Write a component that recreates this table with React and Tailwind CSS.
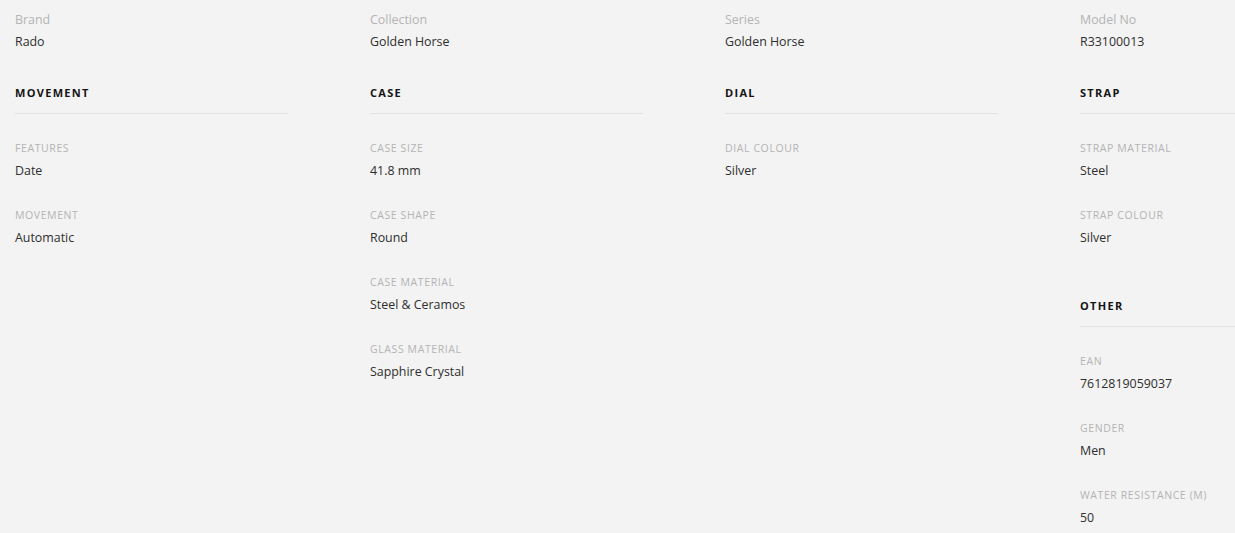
import React from 'react';

const top = [
  { label: 'Brand', value: 'Rado' },
  { label: 'Collection', value: 'Golden Horse' },
  { label: 'Series', value: 'Golden Horse' },
  { label: 'Model No', value: 'R33100013' },
];

const columns = [
  [{ title: 'MOVEMENT', items: [['FEATURES', 'Date'], ['MOVEMENT', 'Automatic']] }],
  [
    {
      title: 'CASE',
      items: [
        ['CASE SIZE', '41.8 mm'],
        ['CASE SHAPE', 'Round'],
        ['CASE MATERIAL', 'Steel & Ceramos'],
        ['GLASS MATERIAL', 'Sapphire Crystal'],
      ],
    },
  ],
  [{ title: 'DIAL', items: [['DIAL COLOUR', 'Silver']] }],
  [
    { title: 'STRAP', items: [['STRAP MATERIAL', 'Steel'], ['STRAP COLOUR', 'Silver']] },
    {
      title: 'OTHER',
      items: [
        ['EAN', '7612819059037'],
        ['GENDER', 'Men'],
        ['WATER RESISTANCE (M)', '50'],
      ],
    },
  ],
];

const Spec = ({ label, value }) => (
  <div>
    <p className="text-[10.5px] leading-[16px] tracking-[0.6px] text-[#b4b4b4]">{label}</p>
    <p className="mt-[7px] text-[12.4px] leading-[16px] text-[#2e2e2e]">{value}</p>
  </div>
);

const Section = ({ title, items }) => (
  <div>
    <h3 className="pb-[12px] border-b border-[#e2e2e2] text-[11px] leading-[16px] font-bold tracking-[1.3px] text-[#141414]">
      {title}
    </h3>
    <div className="pt-[26px] flex flex-col gap-y-[28px]">
      {items.map(([label, value]) => (
        <Spec key={label} label={label} value={value} />
      ))}
    </div>
  </div>
);

export default function App() {
  return (
    <div
      className="w-[1235px] h-[533px] overflow-hidden bg-[#f3f3f3]"
      style={{ fontFamily: '"Open Sans", "Liberation Sans", sans-serif' }}
    >
      <div className="flex gap-x-[82px] pl-[15px] pt-[12px] w-max">
        {top.map((t) => (
          <div key={t.label} className="w-[273px]">
            <p className="text-[12.4px] leading-[16px] text-[#b4b4b4]">{t.label}</p>
            <p className="mt-[6px] text-[12.4px] leading-[16px] text-[#2e2e2e]">{t.value}</p>
          </div>
        ))}
      </div>
      <div className="flex gap-x-[82px] pl-[15px] pt-[35px] w-max">
        {columns.map((col, i) => (
          <div key={i} className="w-[273px] flex flex-col gap-y-[52px]">
            {col.map((s) => (
              <Section key={s.title} title={s.title} items={s.items} />
            ))}
          </div>
        ))}
      </div>
    </div>
  );
}
